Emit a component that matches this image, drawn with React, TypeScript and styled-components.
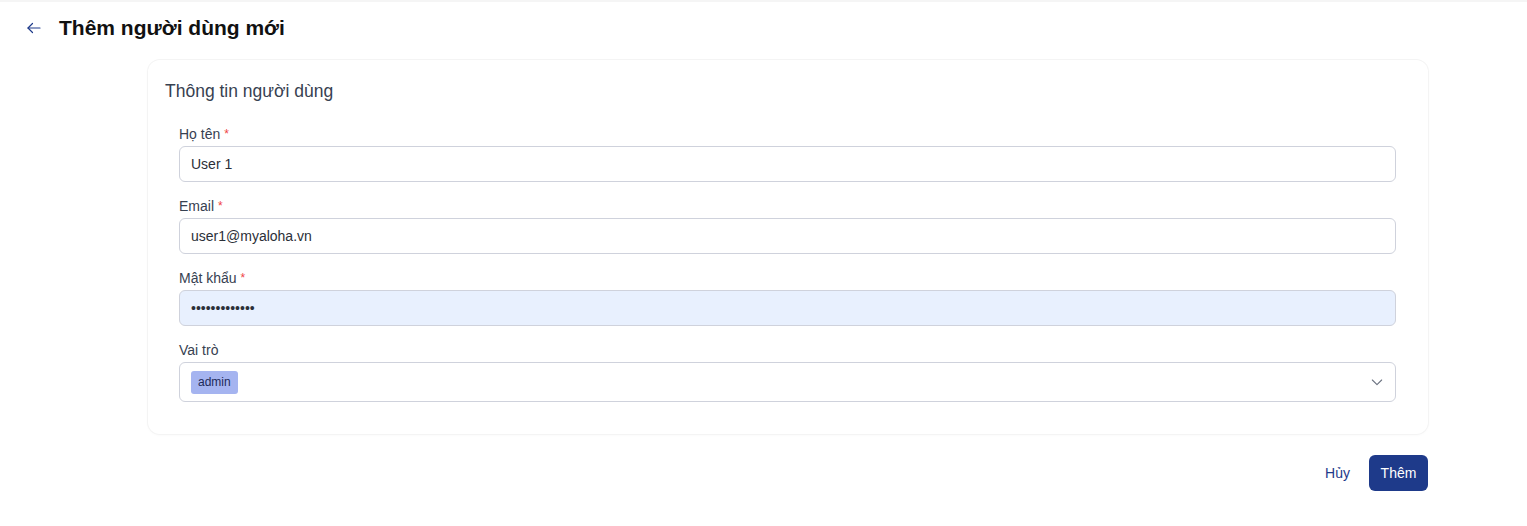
import styled, { createGlobalStyle } from 'styled-components'

const GlobalStyle = createGlobalStyle`
    * {
        box-sizing: border-box;
    }
    body {
        margin: 0;
        background: #ffffff;
        font-family: 'Liberation Sans', Arial, sans-serif;
        color: #1f2937;
    }
`

const ArrowLeft = () => (
    <svg width="18" height="18" viewBox="0 0 24 24" fill="none" stroke="#1e3a8a" strokeWidth="1.6" strokeLinecap="round" strokeLinejoin="round">
        <path d="M20 12H4" />
        <path d="M10 6l-6 6 6 6" />
    </svg>
)

const ChevronDown = () => (
    <svg width="16" height="16" viewBox="0 0 24 24" fill="none" stroke="#6b7280" strokeWidth="1.6" strokeLinecap="round" strokeLinejoin="round">
        <path d="M5 9l7 7 7-7" />
    </svg>
)

interface FieldProps {
    label: string
    required?: boolean
    children: React.ReactNode
}

const Field: React.FC<FieldProps> = ({ label, required, children }) => (
    <FieldWrapper>
        <Label>
            {label}
            {required && <Star>*</Star>}
        </Label>
        {children}
    </FieldWrapper>
)

const App = () => {
    return (
        <>
            <GlobalStyle />
            <Page>
                <Header>
                    <BackButton>
                        <ArrowLeft />
                    </BackButton>
                    <Title>Thêm người dùng mới</Title>
                </Header>
                <Content>
                    <Card>
                        <CardTitle>Thông tin người dùng</CardTitle>
                        <Form>
                            <Field label="Họ tên" required>
                                <Input defaultValue="User 1" />
                            </Field>
                            <Field label="Email" required>
                                <Input defaultValue="user1@myaloha.vn" />
                            </Field>
                            <Field label="Mật khẩu" required>
                                <Input type="password" defaultValue="1234567890123" $autofill />
                            </Field>
                            <Field label="Vai trò">
                                <Select>
                                    <Tag>admin</Tag>
                                    <ChevronDown />
                                </Select>
                            </Field>
                        </Form>
                    </Card>
                    <Actions>
                        <GhostButton>Hủy</GhostButton>
                        <PrimaryButton>Thêm</PrimaryButton>
                    </Actions>
                </Content>
            </Page>
        </>
    )
}

export default App

const Page = styled.div`
    min-height: 526px;
    border-top: 2px solid #f5f5f5;
`

const Header = styled.div`
    display: flex;
    align-items: center;
    gap: 16px;
    height: 52px;
    padding: 0 0 0 25px;
`

const BackButton = styled.div`
    display: flex;
    align-items: center;
    width: 18px;
    height: 18px;
    cursor: pointer;
`

const Title = styled.h1`
    margin: 0;
    font-size: 21px;
    font-weight: 700;
    color: #111111;
`

const Content = styled.div`
    width: 1280px;
    margin: 6px 0 0 148px;
`

const Card = styled.div`
    background: #ffffff;
    border-radius: 12px;
    box-shadow: 0 0 0 1px #f4f4f4, 0 1px 3px rgba(0, 0, 0, 0.04);
    padding: 19px 17px 18px;
`

const CardTitle = styled.h2`
    margin: 0;
    font-size: 17.5px;
    line-height: 24px;
    font-weight: 400;
    color: #374151;
`

const Form = styled.div`
    display: flex;
    flex-direction: column;
    padding: 21px 15px 0 14px;
`

const FieldWrapper = styled.div`
    display: flex;
    flex-direction: column;
    gap: 2px;
    margin-bottom: 14px;
`

const Label = styled.label`
    font-size: 14px;
    line-height: 20px;
    color: #374151;
`

const Star = styled.span`
    color: #ef4444;
    font-size: 12px;
    margin-left: 4px;
    vertical-align: top;
`

const Input = styled.input<{ $autofill?: boolean }>`
    height: 36px;
    width: 100%;
    padding: 0 11px;
    border: 1px solid #cfd2dc;
    border-radius: 6px;
    font-family: 'Liberation Sans', Arial, sans-serif;
    font-size: 14px;
    color: #2b2f38;
    background: ${({ $autofill }) => ($autofill ? '#e8f0fe' : '#ffffff')};
    outline: none;
`

const Select = styled.div`
    display: flex;
    align-items: center;
    justify-content: space-between;
    height: 40px;
    padding: 0 10px 0 11px;
    border: 1px solid #cfd2dc;
    border-radius: 6px;
`

const Tag = styled.span`
    display: inline-flex;
    align-items: center;
    height: 23px;
    padding: 0 7px;
    border-radius: 3px;
    background: #a5b4f0;
    color: #1e2a5a;
    font-size: 12px;
`

const Actions = styled.div`
    display: flex;
    justify-content: flex-end;
    gap: 7px;
    margin-top: 21px;
`

const GhostButton = styled.button`
    height: 36px;
    padding: 0 12px;
    border: none;
    background: transparent;
    border-radius: 6px;
    font-family: 'Liberation Sans', Arial, sans-serif;
    font-size: 14px;
    color: #1e3a8a;
    cursor: pointer;
`

const PrimaryButton = styled.button`
    height: 36px;
    width: 59px;
    padding: 0;
    border: none;
    background: #1e3a8a;
    border-radius: 6px;
    font-family: 'Liberation Sans', Arial, sans-serif;
    font-size: 14px;
    color: #ffffff;
    cursor: pointer;
`
